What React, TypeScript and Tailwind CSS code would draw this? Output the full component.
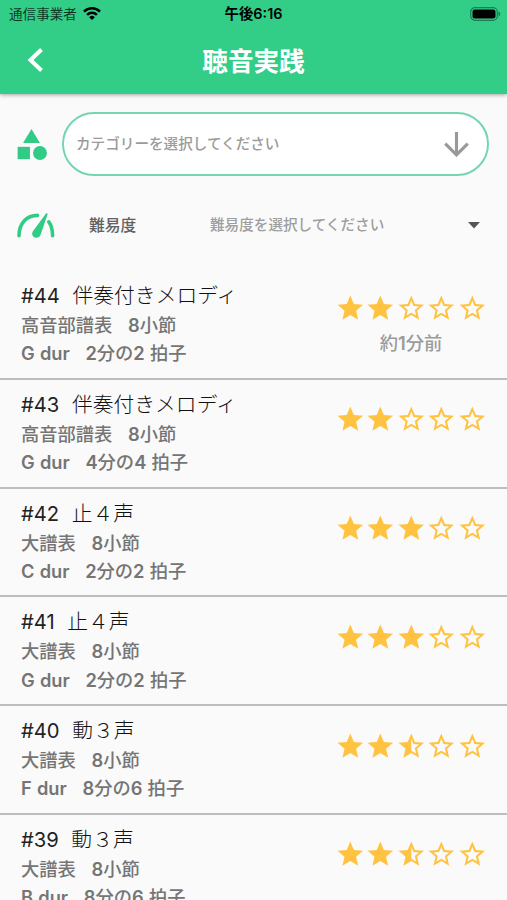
import { MdCategory, MdStar, MdStarBorder, MdStarHalf } from "react-icons/md";

interface Lesson {
  id: number;
  title: string;
  staff: string;
  bars: string;
  musicKey: string;
  meter: string;
  rating: number;
  playedAt?: string;
}

const LESSONS: Lesson[] = [
  { id: 44, title: "伴奏付きメロディ", staff: "高音部譜表", bars: "8小節", musicKey: "G dur", meter: "2分の2 拍子", rating: 2, playedAt: "約1分前" },
  { id: 43, title: "伴奏付きメロディ", staff: "高音部譜表", bars: "8小節", musicKey: "G dur", meter: "4分の4 拍子", rating: 2 },
  { id: 42, title: "止４声", staff: "大譜表", bars: "8小節", musicKey: "C dur", meter: "2分の2 拍子", rating: 3 },
  { id: 41, title: "止４声", staff: "大譜表", bars: "8小節", musicKey: "G dur", meter: "2分の2 拍子", rating: 3 },
  { id: 40, title: "動３声", staff: "大譜表", bars: "8小節", musicKey: "F dur", meter: "8分の6 拍子", rating: 2.5 },
  { id: 39, title: "動３声", staff: "大譜表", bars: "8小節", musicKey: "B dur", meter: "8分の6 拍子", rating: 2.5 },
];

// Latin letters and digits are set heavier than the Japanese around them
function MixedText({ text }: { text: string }) {
  return text.split(/([A-Za-z0-9 ]+)/).map((part, i) =>
    i % 2 ? <span key={i} className="font-semibold">{part}</span> : part
  );
}

function StatusBar() {
  return (
    <div className="grid h-[28px] grid-cols-3 items-center pl-[9px] pr-[6px] text-black">
      <div className="flex items-center gap-[6px] text-[13.6px] text-black/75">
        <span className="whitespace-nowrap">通信事業者</span>
        <svg viewBox="0 0 18 13" className="-mt-[1px] h-[13px] w-[18px] text-black" fill="none" stroke="currentColor" strokeWidth="2.5">
          <path d="M1 4.6a11.4 11.4 0 0 1 16 0" />
          <path d="M4.1 7.8a7 7 0 0 1 9.8 0" />
          <path d="M9 13 6.2 10.2a4 4 0 0 1 5.6 0Z" fill="currentColor" stroke="none" />
        </svg>
      </div>
      <span className="-ml-[3px] text-center text-[14.4px] font-semibold">午後6:16</span>
      <svg viewBox="0 0 31 14" className="-mt-[1px] h-[14px] w-[31px] justify-self-end">
        <rect x="0.7" y="0.7" width="26.6" height="12.6" rx="4.4" fill="none" stroke="#000" strokeOpacity="0.4" strokeWidth="1.2" />
        <rect x="2.5" y="2.4" width="23" height="9.2" rx="2.4" />
        <path d="M28.6 4.6c2 .8 2 4 0 4.8Z" fillOpacity="0.45" />
      </svg>
    </div>
  );
}

function GaugeIcon() {
  return (
    <svg viewBox="0 0 38 25" className="h-[25px] w-[38px]" fill="none" stroke="#32cb86" strokeWidth="3.6" strokeLinecap="round">
      <path d="M2 22.8C2 10.5 9.5 2.4 20.5 2.4" />
      <path d="M31.8 8.8C34.6 12.5 35.6 17 35.6 22.8" />
      <path d="M29.2.3c.7-.4 1.7.1 1.4 1L23.6 21.8c-.9 2.7-3.9 3.7-6.2 2.5-2.3-1.1-2.9-3.8-1.5-6Z" fill="#32cb86" stroke="none" />
    </svg>
  );
}

function Stars({ rating }: { rating: number }) {
  return (
    <div className="flex text-[30.6px] text-[#ffc341]">
      {[1, 2, 3, 4, 5].map((n) => {
        if (rating >= n) return <MdStar key={n} />;
        if (rating >= n - 0.5) return <MdStarHalf key={n} />;
        return <MdStarBorder key={n} />;
      })}
    </div>
  );
}

function LessonRow({ lesson }: { lesson: Lesson }) {
  return (
    <li className="flex h-[108.75px] justify-between border-b-2 border-[#bdbdbd] pl-[21px] pr-[19.5px]">
      <div className="whitespace-pre pt-[10px] text-[18.3px] font-medium leading-[28.4px] text-[#757575] [word-spacing:0.6px]">
        <p className="text-[20.8px] font-light leading-[30px] text-[#111]">
          <span className="text-[20.2px] font-normal text-[#222]">#{lesson.id}{"  "}</span>
          {lesson.title}
        </p>
        <p>
          <MixedText text={`${lesson.staff}   ${lesson.bars}`} />
        </p>
        <p>
          <MixedText text={`${lesson.musicKey}   ${lesson.meter}`} />
        </p>
      </div>
      <div className={`flex flex-col items-center ${lesson.playedAt ? "pt-[22px]" : "pt-[24.5px]"}`}>
        <Stars rating={lesson.rating} />
        {lesson.playedAt && (
          <p className="mt-[5px] text-[18.3px] font-medium leading-[28px] text-[#9b9b9b]">
            <MixedText text={lesson.playedAt} />
          </p>
        )}
      </div>
    </li>
  );
}

export default function App() {
  return (
    <div className="flex h-[900px] w-[507px] flex-col overflow-hidden bg-[#fafafa] font-['Inter','Noto_Sans_CJK_JP',sans-serif]">
      <header className="h-[94px] shrink-0 bg-[#32cd87] shadow-[0_1px_4px_rgba(0,0,0,0.35)]">
        <StatusBar />
        <div className="grid h-[64px] grid-cols-[72px_1fr_72px] items-center">
          <svg viewBox="0 0 16 24" className="ml-[27px] h-[24px] w-[16px]" fill="none" stroke="#fff" strokeWidth="4">
            <path d="M14.5 1.5 3.5 12l11 10.5" />
          </svg>
          <h1 className="pt-[4px] text-center text-[25.6px] font-bold text-white">聴音実践</h1>
        </div>
      </header>

      {/* Filters */}
      <div className="flex shrink-0 items-center pl-[13px] pr-[18px] pt-[18px]">
        <MdCategory className="size-[37px] text-[#32cb86]" />
        <button className="ml-[12px] flex h-[64px] flex-1 items-center justify-between rounded-full border-2 border-[#74d6ae] bg-white pl-[12px] pr-[18px] text-[14.6px] font-medium text-[#9b9b9b]">
          <span className="pt-[2px]">カテゴリーを選択してください</span>
          <svg viewBox="0 0 24 24" className="size-[25px]" fill="none" stroke="#999" strokeWidth="3">
            <path d="M12 0v22M1.2 11.2 12 22l10.8-10.8" />
          </svg>
        </button>
      </div>
      <div className="flex h-[95px] shrink-0 items-center pl-[17px] pr-[27px] pt-[4px] text-[#616161]">
        <GaugeIcon />
        <span className="ml-[34px] w-[121px] text-[15.8px] font-medium">難易度</span>
        <span className="flex-1 text-[14.6px] font-medium text-[#9e9e9e]">難易度を選択してください</span>
        <svg viewBox="0 0 12 7" className="h-[7px] w-[12px]">
          <path d="M0 0h12L6 6.5Z" fill="#555" />
        </svg>
      </div>

      <ul>
        {LESSONS.map((lesson) => (
          <LessonRow key={lesson.id} lesson={lesson} />
        ))}
      </ul>
    </div>
  );
}
